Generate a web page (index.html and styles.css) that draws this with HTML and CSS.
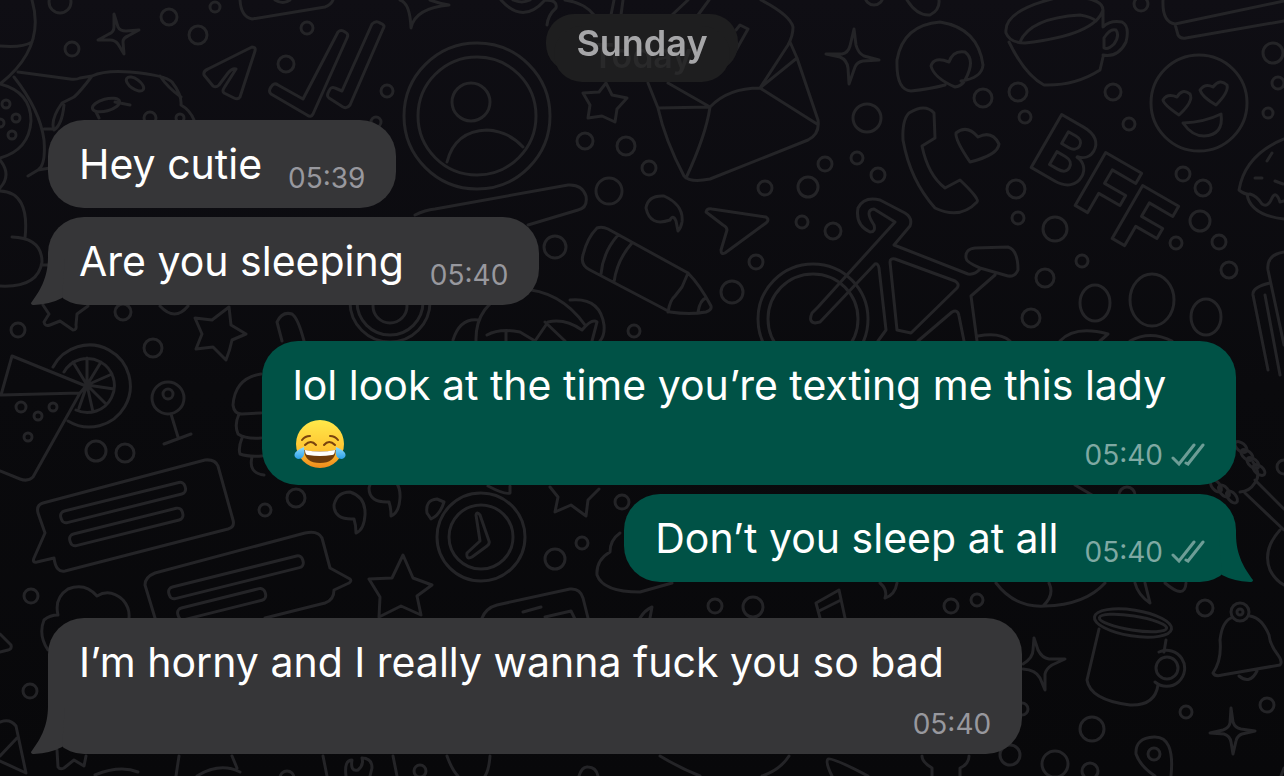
FILE: index.html
```
<!DOCTYPE html>
<html lang="en">
<head>
    <meta charset="UTF-8">
    <meta name="viewport" content="width=device-width, initial-scale=1.0">
    <title>Chat</title>

    <link rel="stylesheet" href="styles.css">
</head>
<body>

    <svg class="wallpaper" viewBox="0 0 1284 776" preserveAspectRatio="xMidYMid slice" aria-hidden="true">
        <!-- balloon, pizza and donut -->
        <path d="M32 0Q46 48 0 84M0 46Q22 48 32 42M18 72L70 79Q76 80 80 78L92 76M92 76Q105 70 130 72Q165 75 172 82Q182 95 181 105Q190 110 194 120M92 76Q80 92 74 97L62 103Q50 120 54 130Q62 125 64 105M115 102l15 3M96 112l3 6M160 76Q168 88 181 97M14 77Q40 110 44 140Q46 165 38 170L28 176M44 129h8M38 170l12-2M0 84Q31 92 31 121Q29 150 0 158M0 160Q12 175 0 188M0 191Q30 192 25 238M12 237Q42 238 42 262Q38 288 0 286M42 265h6"/>
        <ellipse cx="135" cy="84" rx="10" ry="5" transform="rotate(35 135 84)"/>
        <ellipse cx="106" cy="105" rx="14" ry="6" transform="rotate(-15 106 105)"/>
        <!-- sparkles -->
        <path d="M114 14L118 27Q120 31 126 31L139 30L128 36Q123 38 123 42L124 54L118 44Q115 40 110 40L98 40L109 34Q114 32 114 27ZM400 0Q410 3 411 28Q415 8 449 5Q438 3 430 0M854 29L856 45Q858 53 864 56L879 60L863 61Q857 62 855 67L849 84L848 68Q847 60 840 57L826 54L842 54Q848 53 850 46ZM1034 638L1038 650Q1042 658 1049 659L1065 659L1052 665Q1046 669 1045 674L1045 690L1040 678Q1036 670 1023 669M1034 638L1033 650Q1033 658 1023 664M1231 708L1233 722Q1235 728 1241 729L1255 731L1242 734Q1237 736 1236 741L1233 754L1231 742Q1230 736 1224 734L1210 733L1223 730Q1229 728 1230 723Z"/>
        <!-- paper planes and double tick -->
        <path d="M204 75Q203 71 208 69L252 47Q256 47 255 51L240 97Q238 100 234 98L224 93Q222 91 224 88L236 69Q232 68 228 73L219 85Q216 88 213 86ZM338 32Q341 29 345 32Q349 34 347 38L313 114Q311 118 307 115L271 94Q268 91 271 87Q274 82 278 85L303 99ZM372 24Q376 20 380 23Q386 25 383 29L350 105Q347 109 343 107L329 98Q326 96 329 91Q331 86 335 88L342 91ZM240 0Q241 17 252 19L325 7Q331 5 333 0M275 0Q283 5 290 0M706 212Q707 208 712 209L766 217Q770 220 766 223L725 253Q721 255 721 250L727 230Q727 227 723 225Z"/>
        <!-- avatar -->
        <circle cx="477" cy="116" r="73"/>
        <circle cx="477" cy="116" r="59"/>
        <circle cx="471" cy="102" r="19"/>
        <path d="M447 162Q455 131 487 130Q508 131 523 147"/>
        <!-- envelope -->
        <path d="M501 0Q523 25 545 0M513 0Q522 4 530 0M545 0Q558 0 556 8Q548 15 547 25M565 0Q585 3 594 15M614 0L611 15M623 0L621 15M688 0L672 15M709 0L698 15M736 30L740 25L748 29L735 52M761 0Q790 15 793 27Q793 36 788 45L760 88L797 58M790 42L797 58L818 120Q820 134 808 140L710 179Q690 183 684 176Q665 140 658 108L648 83M658 108L710 107L668 83M710 107Q706 135 686 178M710 107Q728 88 760 88L817 124M606 83L612 95L627 98L617 109L615 122L602 116L588 118L590 105L583 93L599 92Z"/>
        <!-- knife, comma and crayon -->
        <path d="M415 215Q425 210 435 209L568 185Q582 184 586 196Q588 208 578 210L528 225M670 220Q650 227 646 208Q648 195 664 196Q684 205 682 222Q681 228 678 231L676 221Q673 214 670 220M597 228Q602 226 608 229L688 273Q700 285 711 306Q712 310 706 312Q690 315 670 312L590 270Q580 265 583 255Q587 238 597 228ZM618 235Q603 252 601 274M632 243Q617 260 614 282M688 273L682 287L675 296Q670 300 668 312M706 298Q700 300 698 312M453 340Q460 318 478 320M476 341Q475 300 520 289Q560 290 585 325M570 300Q600 297 604 325Q605 335 600 341M487 335Q500 328 520 332L535 341M506 331V341M535 341L548 322Q565 318 582 330Q592 318 597 322L592 341M545 322L565 341"/>
        <circle cx="390" cy="302" r="40"/>
        <circle cx="390" cy="302" r="33"/>
        <circle cx="390" cy="306" r="17"/>
        <!-- sticker, cup and laptop -->
        <path d="M907 0Q917 16 930 15Q940 10 939 0M945 85Q930 89 911 91Q896 90 897 60Q903 25 940 22Q978 28 983 65Q982 78 961 81M955 87Q934 78 931 66Q934 56 949 62Q953 50 965 52Q976 60 965 80Q962 86 955 87ZM1006 33Q1003 10 1060-3Q1103-4 1103 10Q1095 35 1025 43Q1010 43 1006 33ZM1020 42Q1030 18 1080 15Q1092 17 1096 21M1009 42Q1025 75 1044 85Q1075 86 1100 70L1103 57M1103 10V27Q1110 20 1122 22Q1130 26 1126 42Q1118 58 1103 55M1104 38Q1110 28 1116 30Q1120 36 1114 44Q1108 50 1104 48ZM1163 0Q1162 22 1175 24L1284 1M1175 24L1178 35Q1180 39 1186 38L1284 21"/>
        <!-- smiley -->
        <circle cx="1199" cy="103" r="48"/>
        <path d="M1179 115Q1164 105 1163 100Q1167 93 1177 97Q1182 88 1190 94Q1194 101 1179 115ZM1216 105Q1202 97 1200 90Q1205 83 1213 87Q1220 78 1227 85Q1229 92 1216 105ZM1183 123Q1205 122 1221 114Q1224 135 1204 136Q1192 136 1183 123Z"/>
        <!-- phone -->
        <path d="M934 113Q925 103 909 113Q902 120 903 140Q910 180 935 208Q960 220 977 202Q980 199 960 180L945 188Q928 175 922 146L935 138ZM970 162Q955 140 956 133Q967 124 978 137Q992 130 999 144Q998 155 970 162Z"/>
        <text class="bff" transform="translate(1027 165) rotate(30)">B</text>
        <text class="bff" transform="translate(1071 203) rotate(30)">F</text>
        <text class="bff" transform="translate(1108 236) rotate(30)">F</text>
        <!-- cupcake and bicycle -->
        <path d="M1284 139Q1245 155 1239 190Q1245 195 1250 194Q1257 196 1262 204Q1268 208 1272 198Q1276 190 1280 202L1284 201M1247 194Q1250 215 1284 219M1267 161l5-8M1255 178h7M1275 181l8 3"/>
        <circle cx="813" cy="319" r="55"/>
        <circle cx="813" cy="319" r="45"/>
        <path d="M818 307L895 222L874 209Q864 210 874 225Q876 232 870 232Q855 225 858 208Q864 196 880 200L905 213Q913 218 910 226L894 245L968 274Q975 275 980 269M818 307L812 313Q808 322 815 323L820 322L875 264Q878 263 879 268L886 330L878 341M890 262Q890 258 895 259L955 281Q960 284 957 288L911 333L897 330ZM918 341L952 312Q958 309 959 316L964 341M977 341L971 296L995 275M966 258Q965 249 975 248L1008 247Q1018 250 1018 270Q1015 277 1008 276L980 268Q966 262 966 258ZM978 336Q1000 332 1010 341"/>
        <!-- people -->
        <ellipse cx="1095" cy="303" rx="15" ry="18"/>
        <ellipse cx="1152" cy="300" rx="22" ry="26"/>
        <ellipse cx="1206" cy="317" rx="15" ry="18"/>
        <path d="M1060 341Q1075 325 1108 334L1100 341M1130 341Q1150 330 1172 341M1284 252Q1266 255 1268 270L1284 345M1270 283Q1252 287 1253 295L1268 370M1265 295L1280 375"/>
        <!-- stars -->
        <path d="M43 305L49 314L44 322Q45 327 50 325L60 321L73 330Q77 330 76 325L77 314L88 306M160 306Q175 322 188 306M229 307L231 325L246 334L232 340Q230 350 226 360L213 347L196 349L202 334L195 318L212 320ZM403 555L413 578L432 585L417 596L421 615L401 606L379 617L380 597L369 579L392 578ZM550 487L558 497L555 512L571 505L586 516L588 500L599 489"/>
        <!-- thumb and cocktail -->
        <path d="M282 341L277 322Q282 311 292 314Q298 318 304 341M261 374Q235 378 233 405Q234 414 242 414L261 413M239 414Q234 425 238 434Q245 439 261 438M242 438Q238 448 240 454Q248 457 262 456M252 457Q248 473 264 475M53 367A41 41 0 1 1 68 421M64 372A27 27 0 1 1 76 410M87 385V358M87 385L73 362M87 385L101 362M87 385L112 374M87 385L114 389M87 385L106 404M87 385L93 412M87 385L79 408M12 356L86 386L80 393L33 477Q28 482 20 479L0 471M12 356L1 395L80 393M171 414L178 437M164 444L191 434"/>
        <!-- speech balloons -->
        <path d="M43 503Q36 505 38 513L45 533L34 558Q32 563 37 562L54 558Q56 573 65 571L228 529Q235 527 233 520L218 466Q215 459 205 460ZM155 618L145 585Q145 577 155 573L305 533Q318 530 322 538L330 568L350 579Q352 581 349 583L334 590Q334 600 325 603L265 618"/>
        <rect x="61" y="512" width="128" height="12" rx="5" transform="rotate(-14 61 518)"/>
        <rect x="70" y="535" width="116" height="12" rx="5" transform="rotate(-14 70 541)"/>
        <rect x="169" y="588" width="138" height="12" rx="5" transform="rotate(-14 169 594)"/>
        <rect x="178" y="609" width="90" height="12" rx="5" transform="rotate(-14 178 615)"/>
        <!-- quotes, clock, cloud -->
        <path d="M354 519Q334 520 334 505Q337 492 350 492Q366 497 365 515Q364 530 356 533Q356 525 354 519ZM389 502Q369 503 369 488Q372 475 385 475Q401 480 400 498Q399 513 391 516Q391 508 389 502ZM476 515Q477 511 480 515L489 541Q490 544 487 546L472 557Q466 560 467 553L480 541ZM427 513Q425 500 437 499L444 502Q440 515 431 519ZM488 486Q505 495 510 493V486M620 533Q610 540 610 552Q596 560 597 575Q603 592 640 592L672 583M482 618Q486 608 497 605L570 589Q580 588 583 598L588 618M523 612l18-5M545 617l26-6l4 8"/>
        <circle cx="481" cy="537" r="44"/>
        <circle cx="481" cy="537" r="32"/>
        <path d="M48 650Q38 635 44 620Q50 615 58 615Q54 598 68 589Q85 582 97 596Q110 588 123 600Q130 608 129 618M0 634L11 645Q12 649 8 650L0 652M0 722Q10 718 16 726L26 773L0 761M17 738L0 756M57 750L58 767Q60 770 64 768L74 760L84 766L86 756M179 756L176 776M197 776Q220 762 240 772M232 756L237 768M95 775Q120 765 138 772"/>
        <!-- row along the bottom -->
        <path d="M323 756L327 776M346 776Q344 760 352 760Q350 772 358 770Q364 765 362 758Q372 758 372 768L370 776M393 756L397 776M447 756Q452 770 458 776M490 756Q489 770 485 776M579 776Q582 766 588 767Q596 767 598 776M660 756Q680 768 700 776M789 756Q780 770 762 776M832 776Q825 762 828 759Q832 757 868 776M922 756Q922 762 932 768V776M969 756Q969 764 960 768V776"/>
        <!-- note, mug, bell, pin -->
        <path d="M640 618Q645 610 652 607L650 618M820 618L816 603L839 590L845 618M819 611L841 600M880 583Q888 590 885 598Q895 595 897 583M996 583Q1015 608 1045 606Q1085 605 1105 583M1049 583Q1055 595 1043 606M1135 583Q1138 595 1150 603L1145 583M1165 583Q1185 600 1186 583M1099 629L1087 680Q1090 700 1130 705Q1155 706 1158 685M1166 640L1164 652M1159 652A18 18 0 1 1 1155 682M1231 618Q1222 622 1220 640Q1222 660 1213 673Q1215 677 1222 675L1280 665Q1283 662 1278 655Q1270 645 1269 635Q1262 618 1250 616M1239 676Q1250 685 1257 671M1171 776Q1175 736 1154 737Q1135 738 1136 754Q1140 766 1155 776M1284 768L1281 776"/>
        <ellipse cx="1133" cy="623" rx="39" ry="13" transform="rotate(9 1133 623)"/>
        <ellipse cx="1133" cy="623" rx="34" ry="7" transform="rotate(9 1133 623)"/>
        <circle cx="1167" cy="668" r="11"/>
        <circle cx="1240" cy="612" r="9"/>
        <!-- toothbrush -->
        <path d="M1253 462Q1262 475 1254 484Q1250 491 1240 492M1255 480L1284 509M1245 493L1284 530M1280 530Q1262 550 1270 570Q1275 580 1284 585M1075 485L1092 495"/>
        <ellipse cx="1241" cy="447" rx="4" ry="7" transform="rotate(-50 1241 447)"/>
        <ellipse cx="1247" cy="455" rx="4" ry="7" transform="rotate(-50 1247 455)"/>
        <ellipse cx="1253" cy="463" rx="4" ry="7" transform="rotate(-50 1253 463)"/>
        <ellipse cx="1259" cy="470" rx="4" ry="7" transform="rotate(-50 1259 470)"/>
        <ellipse cx="1216" cy="486" rx="7" ry="4" transform="rotate(50 1216 486)"/>
        <ellipse cx="1224" cy="491" rx="7" ry="4" transform="rotate(50 1224 491)"/>
        <ellipse cx="1232" cy="497" rx="7" ry="4" transform="rotate(50 1232 497)"/>
        <g id="dots"></g>
    </svg>

    <main class="chat">
        <div class="day">
            <span class="day-next">Today</span>
            <span class="day-label">Sunday</span>
        </div>

        <div class="message in">
            <p>Hey cutie</p>
            <div class="meta"><time>05:39</time></div>
        </div>

        <div class="message in last">
            <p>Are you sleeping</p>
            <div class="meta"><time>05:40</time></div>
            <svg class="tail" viewBox="0 0 34 48"><path d="M17 0C17 22 8 35 0 46Q0 48 3 48Q20 47 31 41L34 0Z"/></svg>
        </div>

        <div class="message out long">
            <p>lol look at the time you’re texting me this lady
                <svg class="emoji" viewBox="0 0 54 50" role="img" aria-label="Face with tears of joy">
                    <defs>
                        <linearGradient id="face" x1="0" y1="0" x2="0" y2="1">
                            <stop offset="0" stop-color="#ffe94a"/>
                            <stop offset="0.6" stop-color="#ffc533"/>
                            <stop offset="1" stop-color="#f08a1c"/>
                        </linearGradient>
                        <linearGradient id="tear" x1="0" y1="0" x2="0" y2="1">
                            <stop offset="0" stop-color="#8fdcff"/>
                            <stop offset="1" stop-color="#2a9fe8"/>
                        </linearGradient>
                    </defs>
                    <circle cx="27" cy="25" r="24" fill="url(#face)"/>
                    <path d="M11 31Q27 34 43 31Q42 44 27 44Q12 44 11 31Z" fill="#6e3b0c"/>
                    <path d="M12 31Q27 34 42 31Q42 36 39 36Q27 38 15 36Q12 36 12 31Z" fill="#fff"/>
                    <path d="M12 26Q18 20 23 26M31 26Q36 20 42 26M9 21Q12 17 17 17M45 21Q42 17 37 17" fill="none" stroke="#7a430e" stroke-width="2" stroke-linecap="round"/>
                    <path d="M11 28Q13 40 5 40Q0 38 2 34Q4 31 11 28ZM43 28Q41 40 49 40Q54 38 52 34Q50 31 43 28Z" fill="url(#tear)"/>
                </svg>
            </p>
            <div class="meta">
                <time>05:40</time>
                <svg class="ticks" viewBox="0 0 34 24" role="img" aria-label="Delivered"><path d="M2 15L8 21L23 2M15 20L17 21L32 2"/></svg>
            </div>
        </div>

        <div class="message out last">
            <p>Don’t you sleep at all</p>
            <div class="meta">
                <time>05:40</time>
                <svg class="ticks" viewBox="0 0 34 24" role="img" aria-label="Delivered"><path d="M2 15L8 21L23 2M15 20L17 21L32 2"/></svg>
            </div>
            <svg class="tail" viewBox="0 0 34 48"><path d="M17 0C17 22 8 35 0 46Q0 48 3 48Q20 47 31 41L34 0Z"/></svg>
        </div>

        <div class="message in last">
            <p>I’m horny and I really wanna fuck you so bad</p>
            <div class="meta"><time>05:40</time></div>
            <svg class="tail" viewBox="0 0 34 48"><path d="M17 0C17 22 8 35 0 46Q0 48 3 48Q20 47 31 41L34 0Z"/></svg>
        </div>
    </main>

    <script src="script.js"></script>
</body>
</html>
```
FILE: styles.css
```
* {
    margin: 0;
    padding: 0;
    box-sizing: border-box;
}

body {
    min-height: 100vh;
    font-family: Inter, "Liberation Sans", sans-serif;
    font-size: 41px;
    line-height: 56px;
    color: #fff;
    background: linear-gradient(#0f0e14, #0a0a0d 50%, #08080a) fixed;
}

.wallpaper {
    position: fixed;
    top: 0;
    left: 0;
    width: 100%;
    height: 100%;
    z-index: -1;
    fill: none;
    stroke: #242427;
    stroke-width: 3;
    stroke-linecap: round;
    stroke-linejoin: round;
}

.bff {
    font-size: 84px;
    font-weight: 800;
}

.chat {
    display: flex;
    flex-direction: column;
    align-items: flex-start;
    padding: 14px 48px 20px;
}

.day {
    position: relative;
    align-self: center;
    margin-bottom: 48px;
    font-weight: 600;
    text-align: center;
}

.day-label {
    position: relative;
    display: block;
    padding: 0 30px;
    font-size: 36px;
    line-height: 58px;
    color: #a6a6a8;
}

.day-label::before {
    content: "";
    position: absolute;
    inset: 0;
    z-index: -1;
    border-radius: 28px;
    background: #1e1e1f;
}

.day-next {
    position: absolute;
    inset: 12px 8px -10px;
    border-radius: 28px;
    font-size: 34px;
    line-height: 60px;
    color: #29292a;
    background: #1e1e1f;
}

.message {
    position: relative;
    display: flex;
    flex-wrap: wrap;
    gap: 18px 26px;
    max-width: 82%;
    margin-bottom: 9px;
    padding: 16px 31px;
    border-radius: 36px;
}

.in {
    background: #363638;
}

.out {
    align-self: flex-end;
    background: #005246;
}

.last {
    margin-bottom: 36px;
}

.meta {
    display: flex;
    align-items: center;
    align-self: flex-end;
    gap: 8px;
    margin: 0 0 -2px auto;
    font-size: 28px;
    line-height: 32px;
    color: #98989e;
}

.out .meta {
    color: #7fa9a3;
}

/* time sits on the last line of the text */
.long {
    display: grid;
}

.long p,
.long .meta {
    grid-area: 1 / 1;
}

.emoji {
    width: 54px;
    height: 50px;
    margin: -8px 0 0;
    vertical-align: -13px;
}

.ticks {
    width: 34px;
    height: 24px;
    fill: none;
    stroke: #6d9d96;
    stroke-width: 3;
    stroke-linecap: round;
}

.tail {
    position: absolute;
    bottom: 0;
    left: -17px;
    width: 34px;
    height: 48px;
    fill: #363638;
}

.out .tail {
    left: auto;
    right: -17px;
    fill: #005246;
    transform: scaleX(-1);
}
```
FILE: script.js
```
// small rings scattered between the doodles: x, y, radius
const dots = [
    [60, 2, 11], [72, 49, 7], [169, 17, 8], [198, 35, 9], [215, 7, 5], [307, 28, 6],
    [286, 64, 8], [387, 91, 6], [376, 122, 5], [150, 118, 6], [180, 118, 4], [6, 104, 4],
    [16, 118, 4], [12, 135, 4], [0, 123, 4], [585, 141, 8], [626, 146, 9], [649, 168, 7],
    [609, 191, 13], [555, 247, 11], [765, 188, 7], [808, 187, 10], [802, 222, 6],
    [756, 262, 7], [732, 292, 11], [634, 331, 6], [825, 164, 7], [833, 231, 8],
    [874, -4, 9], [983, 98, 9], [1018, 92, 9], [1025, 117, 6], [867, 118, 14],
    [857, 158, 6], [878, 175, 7], [1113, 92, 8], [1129, 124, 6], [1141, 4, 7],
    [1016, 189, 9], [1018, 218, 6], [1055, 229, 12], [1082, 261, 6], [1045, 278, 9],
    [1031, 318, 9], [1273, 53, 10], [1278, 83, 6], [1268, 113, 5], [1183, 174, 7],
    [1203, 188, 8], [1200, 221, 10], [1219, 242, 7], [1176, 243, 6], [1229, 270, 8],
    [18, 330, 7], [123, 312, 8], [153, 348, 9], [96, 451, 10], [125, 453, 9],
    [265, 510, 6], [296, 498, 9], [31, 596, 7], [30, 691, 7], [21, 407, 5], [38, 416, 4],
    [53, 407, 4], [28, 437, 4], [168, 398, 16], [168, 394, 5], [622, 502, 7],
    [582, 543, 6], [555, 559, 10], [1205, 608, 8], [1186, 712, 6], [1267, 705, 7],
    [1092, 729, 12], [1055, 764, 13], [1090, 771, 8], [1010, 755, 10], [1022, 709, 6],
    [1154, 754, 6], [1240, 612, 3], [1284, 467, 7], [1127, 495, 8], [715, 606, 7],
    [753, 607, 10], [951, 606, 7], [977, 600, 6], [287, 778, 7], [420, 771, 6]
];

const group = document.getElementById('dots');

dots.forEach(([x, y, r]) => {
    const dot = document.createElementNS('http://www.w3.org/2000/svg', 'circle');
    dot.setAttribute('cx', x);
    dot.setAttribute('cy', y);
    dot.setAttribute('r', r);
    group.appendChild(dot);
});
```
